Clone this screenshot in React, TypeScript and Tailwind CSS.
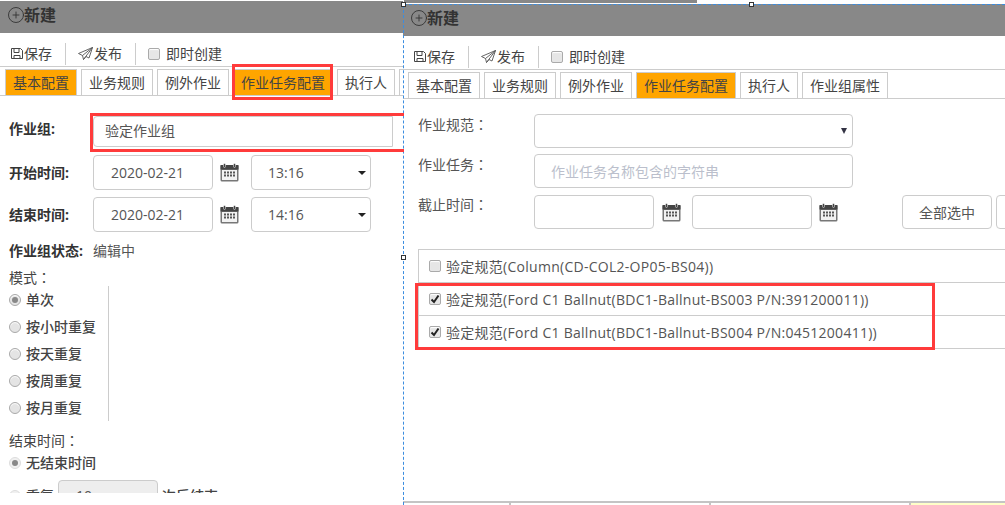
import type { ReactNode } from "react";
import { CirclePlus } from "lucide-react";

type Tab = { label: string; active?: boolean };

const leftTabs: Tab[] = [
  { label: "基本配置", active: true },
  { label: "业务规则" },
  { label: "例外作业" },
  { label: "作业任务配置", active: true },
  { label: "执行人" },
  { label: "作业组属性" },
];

const rightTabs: Tab[] = [
  { label: "基本配置" },
  { label: "业务规则" },
  { label: "例外作业" },
  { label: "作业任务配置", active: true },
  { label: "执行人" },
  { label: "作业组属性" },
];

const modes = ["按小时重复", "按天重复", "按周重复", "按月重复"];

function SaveIcon() {
  return (
    <svg width="12" height="13" viewBox="0 0 12 13" fill="none" stroke="#444" strokeWidth="1">
      <path d="M.5 1.5h9l2 2v8h-11z" />
      <path d="M3 1.5v4h5v-4M3 11.5v-3h6v3" />
    </svg>
  );
}

function PlaneIcon() {
  return (
    <svg width="15" height="13" viewBox="0 0 15 13" fill="none" stroke="#555" strokeWidth="0.9" className="ml-[12px]">
      <path d="M14.5.5.5 6.5l4 2 1 4 2.5-3 3 1.5z" />
      <path d="M14.5.5 4.5 8.5M14.5.5 5.5 12.5" />
    </svg>
  );
}

function CalendarIcon() {
  return (
    <svg width="19" height="19" viewBox="0 0 19 19" className="shrink-0">
      <rect x="0.5" y="2" width="18" height="16.5" rx="1.5" fill="#777" />
      <rect x="0.5" y="2" width="18" height="4.5" fill="#444" />
      <rect x="2" y="7" width="15" height="10" fill="#f2f2f2" />
      <rect x="3.5" y="0.5" width="2" height="4" rx="1" fill="#444" stroke="#fff" strokeWidth="0.5" />
      <rect x="13.5" y="0.5" width="2" height="4" rx="1" fill="#444" stroke="#fff" strokeWidth="0.5" />
      <g fill="#555">
        <rect x="4" y="8.5" width="2" height="2" />
        <rect x="7" y="8.5" width="2" height="2" />
        <rect x="10" y="8.5" width="2" height="2" />
        <rect x="13" y="8.5" width="2" height="2" />
        <rect x="4" y="11.5" width="2" height="2" />
        <rect x="7" y="11.5" width="2" height="2" />
        <rect x="10" y="11.5" width="2" height="2" />
        <rect x="13" y="11.5" width="2" height="2" />
      </g>
    </svg>
  );
}

function Checkbox({ checked }: { checked?: boolean }) {
  return (
    <span className="flex h-[12px] w-[12px] shrink-0 items-center justify-center rounded-[2px] border border-[#aaa] bg-[#e6e6e6] shadow-[inset_0_1px_1px_#fff]">
      {checked ? (
        <svg width="10" height="10" viewBox="0 0 10 10" fill="none" stroke="#222" strokeWidth="2">
          <path d="M1.5 5.5 4 8l4.5-6.5" />
        </svg>
      ) : null}
    </span>
  );
}

function Radio({ checked, light }: { checked?: boolean; light?: boolean }) {
  return (
    <span
      className={
        light
          ? "flex h-[12px] w-[12px] shrink-0 items-center justify-center rounded-full border border-[#ddd] bg-[#f0f0f0]"
          : "flex h-[12px] w-[12px] shrink-0 items-center justify-center rounded-full border border-[#aaa] bg-[#e4e4e4] shadow-[inset_0_1px_1px_#fff]"
      }
    >
      {checked ? <span className="h-[6px] w-[6px] rounded-full bg-[#888]" /> : null}
    </span>
  );
}

function Arrow() {
  return <span className="h-0 w-0 border-x-[4px] border-t-[4px] border-x-transparent border-t-[#222]" />;
}

// the full-width colon sits centred in the TC cut, at the left in SC
function Colon() {
  return <span className="font-['Noto_Sans_CJK_TC',sans-serif]">：</span>;
}

function Box({ className, children }: { className: string; children?: ReactNode }) {
  return (
    <div className={`flex shrink-0 items-center rounded-[4px] border border-[#ccc] bg-white text-[14px] text-[#555] ${className}`}>
      {children}
    </div>
  );
}

function PanelHead({ tabs, offset }: { tabs: Tab[]; offset: string }) {
  return (
    <>
      <div className="flex h-[32px] items-center bg-[#888888] pb-[4px] pl-[7px] text-[16px] font-bold text-[#333]">
        <CirclePlus size={18} strokeWidth={1.2} color="#333" />
        <span className="-ml-[1px]">新建</span>
      </div>
      <div className="flex h-[33px] items-center pl-[11px] pt-[8px] text-[14px] text-[#444]">
        <SaveIcon />
        <span className="ml-[1px]">保存</span>
        <span className="ml-[13px] h-[22px] w-px bg-[#ccc]" />
        <PlaneIcon />
        <span className="ml-[1px]">发布</span>
        <span className="ml-[13px] h-[22px] w-px bg-[#ccc]" />
        <span className="ml-[12px]">
          <Checkbox />
        </span>
        <span className="ml-[6px]">即时创建</span>
      </div>
      <div className={`flex h-[30px] gap-[4px] overflow-hidden border-y border-[#ccc] pt-[2px] text-[14px] text-[#444] ${offset}`}>
        {tabs.map((tab) => (
          <div
            key={tab.label}
            className={
              tab.active
                ? "flex shrink-0 items-center border border-b-0 border-[#ccc] bg-[#ffa500] px-[7px] text-[#444]"
                : "flex shrink-0 items-center border border-b-0 border-[#ccc] bg-white px-[7px]"
            }
          >
            {tab.label}
          </div>
        ))}
      </div>
    </>
  );
}

function LeftPanel() {
  return (
    <section className="h-[493px] w-[403px] shrink-0 overflow-hidden pt-[1px]">
      <PanelHead tabs={leftTabs} offset="pl-[5px]" />
      <div className="pl-[9px] pt-[20px] text-[14px] text-[#444]">
        <div className="flex h-[31px] items-start">
          <span className="mt-[2px] w-[84px] shrink-0 font-bold text-[#333]">作业组:</span>
          <Box className="h-[31px] w-[300px] rounded-r-none pb-[2px] pl-[11px]">验定作业组</Box>
        </div>
        <div className="mt-[8px] flex h-[35px] items-center">
          <span className="w-[84px] shrink-0 font-bold text-[#333]">开始时间:</span>
          <Box className="h-[35px] w-[120px] pl-[17px]">2020-02-21</Box>
          <span className="ml-[7px]"><CalendarIcon /></span>
          <Box className="ml-[12px] h-[35px] w-[120px] justify-between pl-[16px] pr-[4px]">13:16<Arrow /></Box>
        </div>
        <div className="mt-[7px] flex h-[35px] items-center">
          <span className="w-[84px] shrink-0 font-bold text-[#333]">结束时间:</span>
          <Box className="h-[35px] w-[120px] pl-[17px]">2020-02-21</Box>
          <span className="ml-[7px]"><CalendarIcon /></span>
          <Box className="ml-[12px] h-[35px] w-[120px] justify-between pl-[16px] pr-[4px]">14:16<Arrow /></Box>
        </div>
        <div className="mt-[10px] flex h-[17px] items-center">
          <span className="w-[84px] shrink-0 font-bold text-[#333]">作业组状态:</span>
          <span className="text-[#555]">编辑中</span>
        </div>
        <div className="mt-[10px] leading-[17px]">模式<Colon /></div>
        <div className="w-[100px] border-r border-[#ccc] font-medium leading-[27px]">
          <div className="flex h-[27px] items-center gap-[5px]"><Radio checked />单次</div>
          {modes.map((mode) => (
            <div key={mode} className="flex h-[27px] items-center gap-[5px]"><Radio />{mode}</div>
          ))}
        </div>
        <div className="mt-[11px] leading-[17px]">结束时间<Colon /></div>
        <div className="mt-[5px] flex h-[17px] items-center gap-[5px] font-medium"><Radio checked light />无结束时间</div>
        <div className="mt-[9px] flex h-[34px] items-start gap-[4px] font-medium">
          <span className="mr-[1px] mt-[10px]"><Radio light /></span>
          <span className="mt-[5px]">重复</span>
          <div className="h-[34px] w-[100px] shrink-0 rounded-[4px] border border-[#ccc] bg-[#eeeeee] pl-[17px] pt-[4px] font-normal text-[#555]">10</div>
          <span className="mt-[5px]">次后结束</span>
        </div>
      </div>
    </section>
  );
}

const specs = [
  { label: "验定规范(Column(CD-COL2-OP05-BS04))", checked: false },
  { label: "验定规范(Ford C1 Ballnut(BDC1-Ballnut-BS003 P/N:391200011))", checked: true },
  { label: "验定规范(Ford C1 Ballnut(BDC1-Ballnut-BS004 P/N:0451200411))", checked: true },
];

function RightPanel() {
  return (
    <section className="flex h-[505px] min-w-0 flex-1 flex-col pt-[4px]">
      <PanelHead tabs={rightTabs} offset="pl-[5px]" />
      <div className="flex-1 pl-[14px] pt-[15px] text-[14px] text-[#555]">
        <div className="flex h-[34px] pl-[1px]">
          <span className="w-[116px] shrink-0">作业规范<Colon /></span>
          <Box className="h-[34px] w-[319px] justify-end pr-[5px]">
            <span className="h-0 w-0 border-x-[3px] border-t-[6px] border-x-transparent border-t-[#334]" />
          </Box>
        </div>
        <div className="mt-[6px] flex h-[34px] pl-[1px]">
          <span className="w-[116px] shrink-0">作业任务<Colon /></span>
          <Box className="h-[34px] w-[319px] pl-[16px] text-[#bbbfcc]">作业任务名称包含的字符串</Box>
        </div>
        <div className="mt-[7px] flex h-[34px] pl-[1px]">
          <span className="-mt-[1px] w-[116px] shrink-0">截止时间<Colon /></span>
          <Box className="h-[34px] w-[120px]" />
          <span className="ml-[8px] mt-[8px]"><CalendarIcon /></span>
          <Box className="ml-[11px] h-[34px] w-[120px]" />
          <span className="ml-[7px] mt-[8px]"><CalendarIcon /></span>
          <Box className="ml-[64px] h-[34px] w-[90px] justify-center text-[#444]">全部选中</Box>
          <Box className="ml-[4px] h-[34px] w-[40px] rounded-r-none" />
        </div>
        <div className="ml-[1px] mt-[20px] border-l border-t border-[#ccc] tracking-[0.27px]">
          {specs.map((spec) => (
            <div key={spec.label} className="flex h-[33px] items-center gap-[5px] border-b border-[#ccc] pl-[10px]">
              <Checkbox checked={spec.checked} />
              <span>{spec.label}</span>
            </div>
          ))}
        </div>
      </div>
      <div className="flex h-[4px] border-t-2 border-[#c4c4c4] pl-[106px]">
        <span className="h-[2px] w-[200px] border-l-2 border-[#c4c4c4]" />
        <span className="h-[2px] w-[200px] border-l-2 border-[#c4c4c4]" />
        <span className="h-[2px] flex-1 border-l-2 border-[#c4c4c4] bg-[#ffffc8]" />
      </div>
    </section>
  );
}

function Handle({ className }: { className: string }) {
  return <span className={`absolute h-[5px] w-[5px] border border-[#333] bg-white ${className}`} />;
}

export default function App() {
  return (
    <div className="relative flex h-[505px] w-[1005px] overflow-hidden bg-white font-['Open_Sans','Noto_Sans_CJK_SC',sans-serif]">
      <LeftPanel />
      <RightPanel />

      {/* what was left of the page behind the selection */}
      <span className="absolute left-[404px] top-0 h-[3px] w-[293px] bg-[#888888]" />

      {/* selection outline */}
      <span className="absolute bottom-0 left-[403px] top-[5px] border-l border-dashed border-[#3b8de0]" />
      <span className="absolute left-[404px] right-0 top-[4px] border-t border-dashed border-[#3b8de0]" />
      <Handle className="left-[401px] top-[2px]" />
      <Handle className="left-[749px] top-[2px]" />
      <Handle className="left-[401px] top-[255px]" />

      {/* red annotation boxes */}
      <span className="absolute left-[232px] top-[64px] h-[36px] w-[101px] border-[3px] border-[#ff3b3b]" />
      <span className="absolute left-[90px] top-[113px] h-[39px] w-[314px] border-y-[3px] border-l-[3px] border-[#ff3b3b]" />
      <span className="absolute left-[415px] top-[283px] h-[67px] w-[520px] border-[3px] border-[#ff3b3b]" />
    </div>
  );
}
